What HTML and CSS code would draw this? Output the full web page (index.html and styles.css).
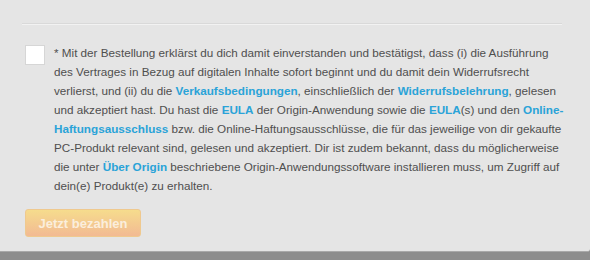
FILE: index.html
```html
<!DOCTYPE html>
<html lang="de">
<head>
    <meta charset="UTF-8">
    <title>Bestellung</title>
    <link rel="stylesheet" href="styles.css">
</head>
<body>
    <div class="panel">
        <hr class="divider">

        <div class="terms">
            <span class="checkbox"></span>
            <p class="terms-text">* Mit der Bestellung erklärst du dich damit einverstanden und bestätigst, dass (i) die Ausführung des Vertrages in Bezug auf digitalen Inhalte sofort beginnt und du damit dein Widerrufsrecht verlierst, und (ii) du die <a href="#">Verkaufsbedingungen</a>, einschließlich der <a href="#">Widerrufsbelehrung</a>, gelesen und akzeptiert hast. Du hast die <a href="#">EULA</a> der Origin-Anwendung sowie die <a href="#">EULA</a>(s) und den <a href="#">Online-Haftungsausschluss</a> bzw. die Online-Haftungsausschlüsse, die für das jeweilige von dir gekaufte PC-Produkt relevant sind, gelesen und akzeptiert. Dir ist zudem bekannt, dass du möglicherweise die unter <a href="#">Über Origin</a> beschriebene Origin-Anwendungssoftware installieren muss, um Zugriff auf dein(e) Produkt(e) zu erhalten.</p>
        </div>

        <button class="pay-button" disabled>Jetzt bezahlen</button>
    </div>
</body>
</html>
```

FILE: styles.css
```css
body {
    margin: 0;
    background-color: #8d8d8d;
    font-family: "Liberation Sans", Arial, sans-serif;
}
.panel {
    background-color: #e5e5e5;
    height: 252px;
    border-bottom: 1px solid #a9a9a9;
    border-bottom-right-radius: 3px;
    padding: 23px 24px 0 25px;
    box-sizing: border-box;
}
.divider {
    margin: 0 4px 0 -3px;
    border: 0;
    border-top: 1px solid #d9d9d9;
    border-bottom: 1px solid #f2f2f2;
}
.terms {
    display: flex;
    gap: 9px;
    margin-top: 19px;
}
.checkbox {
    flex: none;
    width: 18px;
    height: 18px;
    background-color: #fff;
    border: 1px solid #d6d6d6;
    margin-top: 1px;
}
.terms-text {
    margin: -1px 0 0;
    font-size: 11.7px;
    line-height: 19px;
    color: #4f4f4f;
}
.terms-text a {
    color: #2aa3d8;
    font-weight: bold;
    text-decoration: none;
}
.pay-button {
    margin-top: 14px;
    width: 116px;
    height: 28px;
    border: 1px solid #efc98f;
    border-radius: 3px;
    background: linear-gradient(#f6dc8d, #f2ba93);
    color: #fbeedc;
    font-family: "Liberation Sans", Arial, sans-serif;
    font-size: 13px;
    font-weight: bold;
    padding: 0;
}
```
